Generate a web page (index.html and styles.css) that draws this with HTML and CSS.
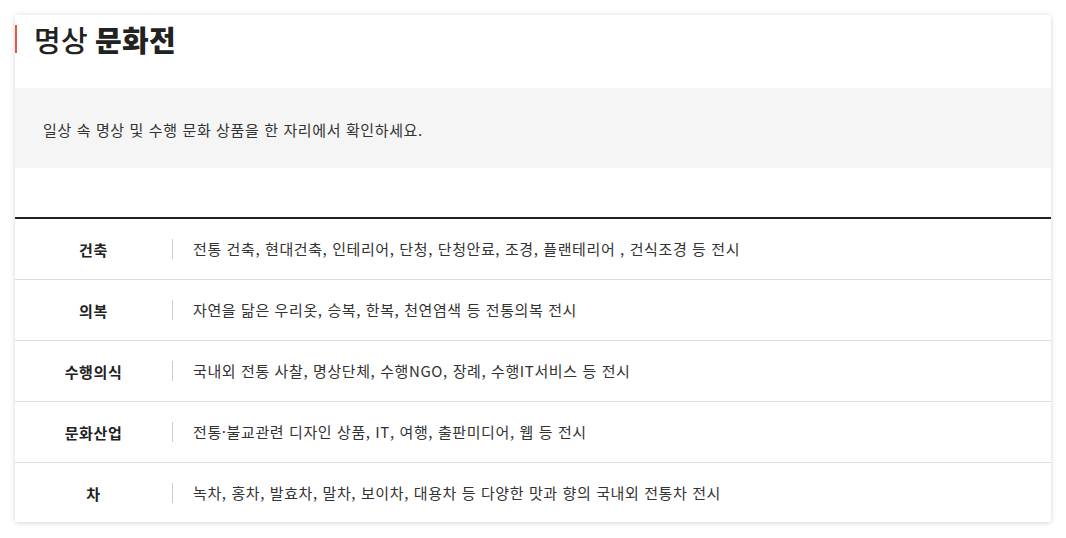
FILE: index.html
```html
<!DOCTYPE html>
<html lang="ko">
<head>
<meta charset="utf-8">
<link rel="stylesheet" href="styles.css">
</head>
<body>
<div class="card">
  <div class="head">
    <h1 class="title"><span class="light">명상</span> <span class="bold">문화전</span></h1>
  </div>
  <div class="intro">일상 속 명상 및 수행 문화 상품을 한 자리에서 확인하세요.</div>
  <div class="table">
    <div class="row"><div class="label">건축</div><div class="desc">전통 건축, 현대건축, 인테리어, 단청, 단청안료, 조경, 플랜테리어 , 건식조경 등 전시</div></div>
    <div class="row"><div class="label">의복</div><div class="desc">자연을 닮은 우리옷, 승복, 한복, 천연염색 등 전통의복 전시</div></div>
    <div class="row"><div class="label">수행의식</div><div class="desc">국내외 전통 사찰, 명상단체, 수행NGO, 장례, 수행IT서비스 등 전시</div></div>
    <div class="row"><div class="label">문화산업</div><div class="desc">전통·불교관련 디자인 상품, IT, 여행, 출판미디어, 웹 등 전시</div></div>
    <div class="row"><div class="label">차</div><div class="desc">녹차, 홍차, 발효차, 말차, 보이차, 대용차 등 다양한 맛과 향의 국내외 전통차 전시</div></div>
  </div>
</div>
</body>
</html>
```

FILE: styles.css
```css
* { box-sizing: border-box; }
html, body { margin: 0; padding: 0; background: #fff; }
body {
  font-family: "Noto Sans CJK KR", "Noto Sans", sans-serif;
  color: #333;
  padding: 15px;
}
.card {
  width: 1036px;
  height: 507px;
  background: #fff;
  box-shadow: 0 0 6px rgba(0,0,0,0.12), 0 2px 4px rgba(0,0,0,0.06);
}
.head {
  height: 73px;
  padding-top: 10px;
}
.title {
  margin: 0;
  height: 28px;
  border-left: 2px solid #e8534a;
  padding-left: 17px;
  font-size: 29px;
  line-height: 28px;
  letter-spacing: 0.3px;
  color: #222;
  display: flex;
  align-items: center;
  gap: 7px;
}
.title .light { font-weight: 500; }
.title .bold { font-weight: 900; }
.intro {
  height: 80px;
  background: #f5f5f5;
  padding-left: 28px;
  display: flex;
  align-items: center;
  font-size: 15px;
  letter-spacing: 0.62px;
  color: #333;
  padding-top: 2px;
}
.table {
  margin-top: 49px;
  border-top: 2px solid #222;
}
.row {
  display: flex;
  align-items: center;
  height: 61px;
  border-bottom: 1px solid #ddd;
}
.row:last-child { border-bottom: none; height: 60px; }
.label {
  width: 157px;
  text-align: center;
  font-weight: 700;
  font-size: 15px;
  letter-spacing: 0.6px;
  color: #222;
}
.desc {
  border-left: 1px solid #ccc;
  height: 20px;
  line-height: 20px;
  padding-left: 20px;
  font-size: 15px;
  letter-spacing: 0.6px;
  color: #333;
}
```
